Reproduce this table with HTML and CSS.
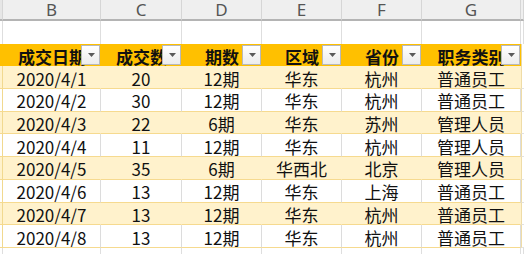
FILE: index.html
```html
<!DOCTYPE html>
<html lang="zh">
<head>
<meta charset="utf-8">
<link rel="stylesheet" href="styles.css">
</head>
<body>
<div class="sheet">
  <div class="row colhdr">
    <div class="cell edge"></div>
    <div class="cell">B</div><div class="cell">C</div><div class="cell">D</div>
    <div class="cell">E</div><div class="cell">F</div><div class="cell">G</div>
    <div class="cell x"></div>
  </div>
  <div class="row blank">
    <div class="cell edge"></div>
    <div class="cell"></div><div class="cell"></div><div class="cell"></div>
    <div class="cell"></div><div class="cell"></div><div class="cell"></div>
    <div class="cell x"></div>
  </div>
  <div class="row thead">
    <div class="cell edge"></div>
    <div class="cell">成交日期<span class="filter"><svg viewBox="0 0 7 4" width="7" height="4"><path d="M0 0h7l-3.5 4z"/></svg></span></div>
    <div class="cell">成交数<span class="filter"><svg viewBox="0 0 7 4" width="7" height="4"><path d="M0 0h7l-3.5 4z"/></svg></span></div>
    <div class="cell">期数<span class="filter"><svg viewBox="0 0 7 4" width="7" height="4"><path d="M0 0h7l-3.5 4z"/></svg></span></div>
    <div class="cell">区域<span class="filter"><svg viewBox="0 0 7 4" width="7" height="4"><path d="M0 0h7l-3.5 4z"/></svg></span></div>
    <div class="cell">省份<span class="filter"><svg viewBox="0 0 7 4" width="7" height="4"><path d="M0 0h7l-3.5 4z"/></svg></span></div>
    <div class="cell">职务类别<span class="filter"><svg viewBox="0 0 7 4" width="7" height="4"><path d="M0 0h7l-3.5 4z"/></svg></span></div>
    <div class="cell x"></div>
  </div>
  <div class="row data band">
    <div class="cell edge"></div>
    <div class="cell">2020/4/1</div><div class="cell">20</div><div class="cell">12期</div>
    <div class="cell">华东</div><div class="cell">杭州</div><div class="cell">普通员工</div>
    <div class="cell x"></div>
  </div>
  <div class="row data">
    <div class="cell edge"></div>
    <div class="cell">2020/4/2</div><div class="cell">30</div><div class="cell">12期</div>
    <div class="cell">华东</div><div class="cell">杭州</div><div class="cell">普通员工</div>
    <div class="cell x"></div>
  </div>
  <div class="row data band">
    <div class="cell edge"></div>
    <div class="cell">2020/4/3</div><div class="cell">22</div><div class="cell">6期</div>
    <div class="cell">华东</div><div class="cell">苏州</div><div class="cell">管理人员</div>
    <div class="cell x"></div>
  </div>
  <div class="row data">
    <div class="cell edge"></div>
    <div class="cell">2020/4/4</div><div class="cell">11</div><div class="cell">12期</div>
    <div class="cell">华东</div><div class="cell">杭州</div><div class="cell">管理人员</div>
    <div class="cell x"></div>
  </div>
  <div class="row data band">
    <div class="cell edge"></div>
    <div class="cell">2020/4/5</div><div class="cell">35</div><div class="cell">6期</div>
    <div class="cell">华西北</div><div class="cell">北京</div><div class="cell">管理人员</div>
    <div class="cell x"></div>
  </div>
  <div class="row data">
    <div class="cell edge"></div>
    <div class="cell">2020/4/6</div><div class="cell">13</div><div class="cell">12期</div>
    <div class="cell">华东</div><div class="cell">上海</div><div class="cell">普通员工</div>
    <div class="cell x"></div>
  </div>
  <div class="row data band">
    <div class="cell edge"></div>
    <div class="cell">2020/4/7</div><div class="cell">13</div><div class="cell">12期</div>
    <div class="cell">华东</div><div class="cell">杭州</div><div class="cell">普通员工</div>
    <div class="cell x"></div>
  </div>
  <div class="row data">
    <div class="cell edge"></div>
    <div class="cell">2020/4/8</div><div class="cell">13</div><div class="cell">12期</div>
    <div class="cell">华东</div><div class="cell">杭州</div><div class="cell">普通员工</div>
    <div class="cell x"></div>
  </div>
  <div class="row blank tail">
    <div class="cell edge"></div>
    <div class="cell"></div><div class="cell"></div><div class="cell"></div>
    <div class="cell"></div><div class="cell"></div><div class="cell"></div>
    <div class="cell x"></div>
  </div>
</div>
</body>
</html>
```
FILE: styles.css
```css
html, body {
  margin: 0;
  padding: 0;
  background: #ffffff;
}

.sheet {
  width: 524px;
  height: 254px;
  overflow: hidden;
  font-family: "Noto Sans CJK SC", "Noto Sans", sans-serif;
  color: #111111;
}

.row {
  display: grid;
  grid-template-columns: 3px 98px 81px 80px 80px 80px 99px 1fr;
  height: 22.7px;
}

.cell {
  box-sizing: border-box;
  position: relative;
  display: flex;
  align-items: center;
  justify-content: center;
  white-space: nowrap;
  overflow: hidden;
  font-size: 17px;
  line-height: 1;
}

/* column letters */
.colhdr {
  height: 21px;
}
.colhdr .cell {
  background: #efefef;
  border-right: 1px solid #d6d6d6;
  border-bottom: 2px solid #b4b4b4;
  color: #555555;
  font-family: "Noto Sans", sans-serif;
  font-size: 17px;
  padding-top: 0;
}
.colhdr .edge {
  background: #e6e6e6;
}

/* empty grid rows */
.blank .cell {
  background: #ffffff;
  border-right: 1px solid #dedede;
}
.tail .cell {
  border-bottom: 1px solid #e2e2e2;
}

/* table header */
.thead .cell {
  background: #ffc000;
  font-weight: 700;
  color: #111111;
  padding-top: 2px;
}
.thead .x {
  background: #ffffff;
  border-left: 1px solid #e8d9a8;
}

.filter {
  position: absolute;
  top: 1px;
  right: 1px;
  width: 19px;
  height: 20px;
  box-sizing: border-box;
  border: 1px solid #b9b9b9;
  background: linear-gradient(#ffffff, #ececec);
  display: flex;
  align-items: center;
  justify-content: center;
}
.filter svg {
  fill: #5a5a5a;
  margin-left: 1px;
}

/* data rows */
.data .cell {
  background: #ffffff;
  border-right: 1px solid #dcdcdc;
  border-bottom: 1px solid #f6da8f;
  padding-top: 2px;
}
.data.band .cell {
  background: #fff2cc;
  border-right-color: #fff2cc;
}
.data .x,
.data.band .x {
  background: #ffffff;
  border-left: 1px solid #efdca6;
  border-right: none;
  border-bottom-color: #e2e2e2;
}
.data .edge {
  border-right-color: #f1d98f;
}
.data.band .edge {
  border-right-color: #f1d98f;
}
```
